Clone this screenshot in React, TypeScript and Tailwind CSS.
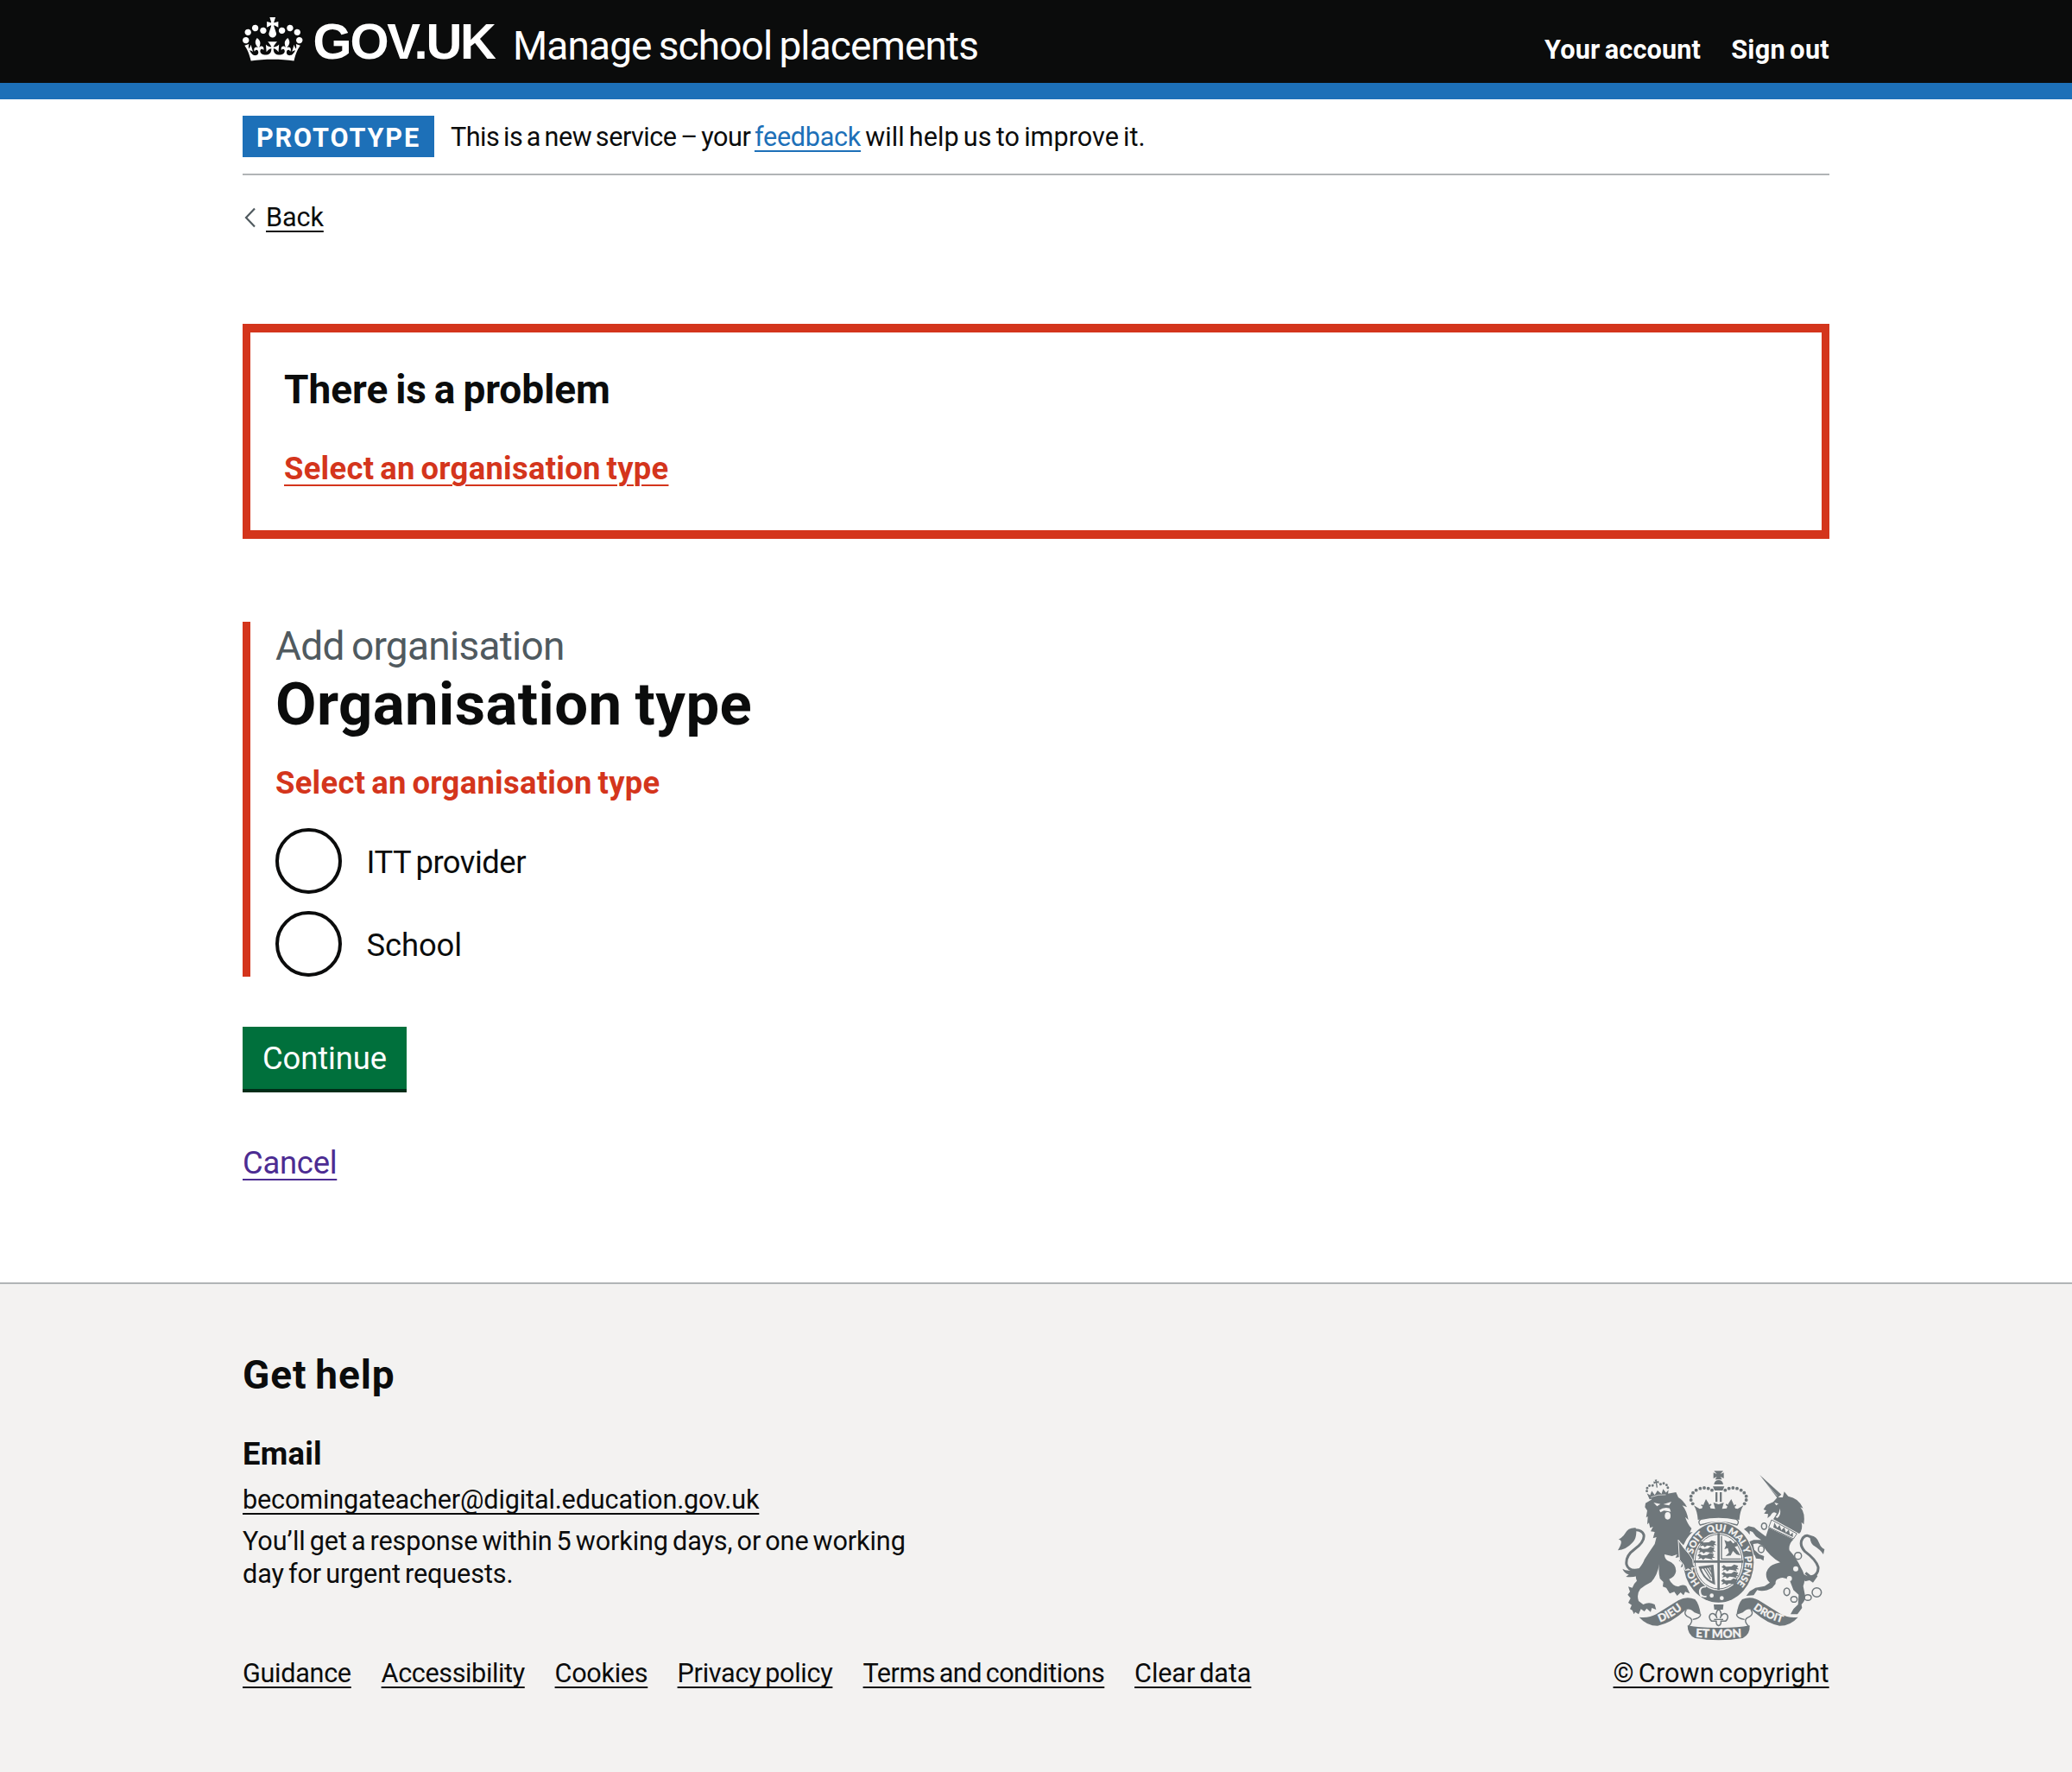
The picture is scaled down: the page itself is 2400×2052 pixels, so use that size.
import React from "react";

const BG = "#f3f2f1";
const GREY = "#6f777b";

const CROWN_PATH =
  "M25 30.2c3.5 1.5 7.7-.2 9.1-3.7 1.5-3.6-.2-7.8-3.9-9.2-3.6-1.4-7.6.3-9.1 3.9-1.4 3.5.3 7.5 3.9 9zM9 39.5c3.6 1.5 7.8-.2 9.2-3.7 1.5-3.6-.2-7.8-3.9-9.1-3.6-1.5-7.6.2-9.1 3.8-1.4 3.5.3 7.5 3.8 9zM4.4 57.2c3.5 1.5 7.7-.2 9.1-3.8 1.5-3.6-.2-7.7-3.9-9.1-3.5-1.5-7.6.3-9.1 3.8-1.4 3.5.3 7.6 3.9 9.1zm38.3-21.4c3.5 1.5 7.7-.2 9.1-3.8 1.5-3.6-.2-7.7-3.9-9.1-3.6-1.5-7.6.3-9.1 3.8-1.3 3.6.4 7.7 3.9 9.1zm64.4-5.6c-3.6 1.5-7.8-.2-9.1-3.7-1.5-3.6.2-7.8 3.8-9.2 3.6-1.4 7.7.3 9.2 3.9 1.3 3.5-.4 7.5-3.9 9zm15.9 9.3c-3.6 1.5-7.7-.2-9.1-3.7-1.5-3.6.2-7.8 3.7-9.1 3.6-1.5 7.7.2 9.2 3.8 1.5 3.5-.3 7.5-3.8 9zm4.7 17.7c-3.6 1.5-7.8-.2-9.2-3.8-1.5-3.6.2-7.7 3.9-9.1 3.6-1.5 7.7.3 9.2 3.8 1.3 3.5-.4 7.6-3.9 9.1zM89.3 35.8c-3.6 1.5-7.8-.2-9.2-3.8-1.4-3.6.2-7.7 3.9-9.1 3.6-1.5 7.7.3 9.2 3.8 1.4 3.6-.3 7.7-3.9 9.1zM69.7 17.7l8.9 4.7V9.3l-8.9 2.8c-.2-.3-.5-.6-.9-.9L72.4 0H59.6l3.5 11.2c-.3.3-.6.5-.9.9l-8.8-2.8v13.1l8.8-4.7c.3.3.6.7.9.9l-5 15.4v.1c-.2.8-.4 1.6-.4 2.4 0 4.1 3.1 7.5 7 8.1h.2c.3 0 .7.1 1 .1.4 0 .7 0 1-.1h.2c4-.6 7.1-4.1 7.1-8.1 0-.8-.1-1.7-.4-2.4V34l-5.1-15.4c.4-.2.7-.6 1-.9zM66 92.8c16.9 0 32.8 1.1 47.1 3.2 4-16.9 8.9-26.7 14-33.5l-9.6-3.4c1 4.9 1.1 7.2 0 10.2-1.5-1.4-3-4.3-4.2-8.7L108.6 76c2.8-2 5-3.2 7.5-3.3-4.4 9.4-10 11.9-13.6 11.2-4.3-.8-6.3-4.6-5.6-7.9 1-4.7 5.7-5.9 8-.5 4.3-8.7-3-11.4-7.6-8.8 7.1-7.2 7.9-13.5 2.1-21.1-8 6.1-8.1 12.3-4.5 20.8-4.7-5.4-12.1-2.5-9.5 6.2 3.4-5.2 7.9-2 7.2 3.1-.6 4.3-6.4 7.8-13.5 7.2-10.3-.9-10.9-8-11.2-13.8 2.5-.5 7.1 1.8 11 7.3L80.2 60c-4.1 4.4-8 5.3-12.3 5.4 1.4-4.4 8-11.6 8-11.6H55.5s6.4 7.2 7.9 11.6c-4.2-.1-8-1-12.3-5.4l1.4 16.4c3.9-5.5 8.5-7.7 10.9-7.3-.3 5.8-.9 12.8-11.1 13.8-7.2.6-12.9-2.9-13.5-7.2-.7-5 3.8-8.3 7.1-3.1 2.7-8.7-4.6-11.6-9.4-6.2 3.7-8.5 3.6-14.7-4.6-20.8-5.8 7.6-5 13.9 2.2 21.1-4.7-2.6-11.9.1-7.7 8.8 2.3-5.5 7.1-4.2 8.1.5.7 3.3-1.3 7.1-5.7 7.9-3.5.7-9-1.8-13.5-11.2 2.5.1 4.7 1.3 7.5 3.3l-4.7-15.4c-1.2 4.4-2.7 7.2-4.3 8.7-1.1-3-.9-5.3 0-10.2l-9.5 3.4c5 6.9 9.9 16.7 14 33.5 14.8-2.1 30.8-3.2 47.7-3.2z";

function Crown() {
  return (
    <svg viewBox="0 0 132 97" className="block h-[51px] w-[69.5px] fill-white" aria-hidden="true">
      <path d={CROWN_PATH} />
    </svg>
  );
}

const ARCH_DOTS: [number, number][] = [
  [272, 124], [266, 111], [266, 98], [273, 86], [284, 77], [298, 71], [312, 69], [326, 71], [339, 77],
];

function Lion() {
  return (
    <g>
      <path d="M108 122L128 110L133 98L214 84L222 102Q240 112 252 136L236 130Q252 150 257 180L246 170Q254 195 268 210L262 224L272 222Q254 238 246 256L240 268L222 250Q236 275 258 300Q274 315 272 335L276 350L262 343L266 360L252 348L246 354L242 340L230 346L236 330L224 322L230 308L212 312L218 300L200 306L174 300Q174 316 185 322Q214 332 214 358Q212 378 190 386Q200 408 222 412Q236 402 250 410L262 436L246 430L240 442L230 432L218 444L208 430L192 436L180 416L168 412L170 396L158 384Q152 360 156 334Q150 372 128 396Q104 408 90 420Q76 438 84 462L100 474Q120 464 140 474L145 492L130 486L126 500L112 488L104 498L92 490L84 508L72 500L68 508L62 494L54 490L60 476L48 468L56 452L46 440L54 430L48 412L62 416Q66 402 78 392Q68 372 86 348Q102 328 104 318Q122 290 140 264L146 240L134 244L140 222L126 220L134 204L124 208L120 190L114 196L116 168L110 172L114 148L106 136Z" />
      <path d="M88 352Q50 362 42 335Q38 305 70 282Q106 255 102 232Q96 214 72 215" fill="none" stroke={GREY} strokeWidth="9" />
      <path d="M74 208Q48 206 38 226Q30 240 14 248Q34 250 12 286Q40 284 60 262Q76 248 76 222Z" />
      <path d="M28 350Q46 362 80 350L92 366Q78 382 40 378L50 370Q34 366 28 350Z" />
      <path d="M136 120L160 125L148 133ZM170 126L198 117L190 130Z" fill={BG} />
      <path d="M156 146Q172 134 192 140L196 152L186 150L172 148L160 154Z" fill={BG} />
      <ellipse cx="185" cy="166" rx="10" ry="13" fill={BG} />
      <g transform="rotate(-9 150 80)">
        <path d="M118 104L112 82L122 90L130 76L138 92L150 78L162 92L170 76L178 90L188 82L182 104Q150 98 118 104Z" />
        {[[113, 74], [116, 64], [125, 57], [136, 58], [164, 58], [175, 57], [184, 64], [187, 74]].map(([x, y]) => (
          <circle key={x} cx={x} cy={y} r="4.4" />
        ))}
        <path d="M146 40H154L152 47L159 45V54L152 51V68H148V51L141 54V45L148 47Z" />
        <path d="M124 97Q150 91 176 97" fill="none" stroke={BG} strokeWidth="2" />
      </g>
    </g>
  );
}

function Unicorn() {
  return (
    <g>
      <path d="M505 24L580 92L566 104Z" />
      <path d="M513 38L566 97" stroke={BG} strokeWidth="1.5" />
      <path d="M518 144L528 128L552 118L566 102L585 102L590 82L604 98Q640 104 656 140L646 136Q664 156 658 196L650 188Q656 214 642 228L552 178L564 158Q552 146 542 166L532 174L534 160L520 158L528 148Z" />
      <path d="M556 120L570 124L562 130ZM574 140Q582 160 566 174L560 170Q574 158 574 140Z" fill={BG} />
      <path d="M546 180L634 228L622 246L536 206Z" fill={BG} stroke={GREY} strokeWidth="3" />
      <path d="M552 206L556 190L566 208L574 198L580 216L590 206L596 224L606 214L610 232L620 224L620 240Z" />
      <path d="M536 208L622 248Q604 264 608 286Q632 312 648 346Q668 378 656 410L662 440Q666 458 650 474L652 486L636 508L612 508L622 490L638 474L640 440L622 424L610 392Q590 376 572 384Q558 388 560 402L548 416Q520 432 496 424L484 442L458 444L470 428L490 416L522 410L540 398Q524 384 528 362Q536 338 560 332L576 328Q540 308 516 270L498 262L482 264L486 284L504 300L520 306L518 322L508 316L492 314L488 304L474 292L468 256L484 250L510 250L492 238L480 222L470 218L470 232L462 222L450 212L466 202L486 206L500 218L526 238Z" />
      <path d="M690 246Q668 224 654 244Q640 266 662 290Q700 318 708 344Q710 370 684 380L664 364" fill="none" stroke={GREY} strokeWidth="9" />
      <path d="M680 234Q704 236 712 262Q718 278 730 282L726 300Q716 284 690 268Q678 256 680 234Z" />
      <path d="M650 366L672 376L700 368L706 376L690 398L678 390L662 394Z" />
      <g fill="none" stroke={GREY} strokeWidth="4.5">
        <ellipse cx="520" cy="202" rx="9" ry="11" fill={BG} />
        <ellipse cx="510" cy="282" rx="10" ry="12" fill={BG} />
        <circle cx="638" cy="305" r="12" fill={BG} />
        <ellipse cx="599" cy="430" rx="10" ry="13" />
        <ellipse cx="624" cy="456" rx="11" ry="10" />
        <ellipse cx="672" cy="450" rx="12" ry="10" />
        <circle cx="703" cy="432" r="16" />
      </g>
      <g fill={BG}>
        <circle cx="630" cy="350" r="9" />
        <circle cx="608" cy="384" r="9" />
      </g>
    </g>
  );
}

function Ribbon() {
  return (
    <g>
      <path d="M86 518Q120 522 145 508L222 460Q250 444 280 456Q294 470 300 510L278 502Q264 486 248 492Q196 540 150 548Q112 548 86 518Z" />
      <path d="M250 492Q236 510 262 520Q278 530 256 552M300 508Q298 522 272 526" fill="none" stroke={GREY} strokeWidth="4" />
    </g>
  );
}

function LionRow({ y, x }: { y: number; x: number }) {
  return (
    <path
      transform={`translate(${x} ${y})`}
      d="M0 0L8 -7L16 -1L34 -2L44 -9L58 -4L54 3L62 8L50 8L54 15L40 11L28 9L20 15L14 9L2 13L8 5Z"
    />
  );
}

function CoatOfArms() {
  return (
    <svg viewBox="0 0 750 615" className="block h-[205px] w-[250px] fill-[#6f777b] [word-spacing:0px]" aria-hidden="true">
      <defs>
        <path id="garter" d="M362 431A92 106 0 0 1 362 219A92 106 0 0 1 362 431" pathLength="100" />
        <path id="dieu" d="M146 539Q190 529 246 482" />
        <path id="droit" d="M470 479Q520 524 602 543" />
        <path id="etmon" d="M262 586Q362 594 462 586" />
      </defs>
      <Lion />
      <Unicorn />

      {/* royal crown */}
      {ARCH_DOTS.map(([x, y]) => (
        <g key={`${x}-${y}`}>
          <circle cx={x} cy={y} r="5.8" />
          <circle cx={724 - x} cy={y} r="5.8" />
        </g>
      ))}
      <path d="M346 10H378L368 21L380 16V36L368 30L374 40H350L356 30L344 36V16L356 21Z" />
      <path d="M346 57Q348 42 362 42Q376 42 378 57ZM342 64H382L376 78H348Z" />
      <path d="M351 84H358V118H351ZM366 84H373V118H366Z" />
      <path d="M276 130L296 142L304 140L310 126L318 108L328 124L334 140L350 142L344 120L362 126L380 120L374 142L390 140L396 124L406 108L414 126L420 140L428 142L448 130Q436 150 434 180Q362 166 290 180Q288 150 276 130Z" />
      <path d="M302 128L312 134L318 128L326 134L336 126M388 126L398 134L406 128L414 134L422 128" fill="none" stroke={GREY} strokeWidth="5" />
      <path d="M300 178Q362 164 424 178Q436 186 426 198Q362 176 298 198Q288 186 300 178Z" fill={BG} stroke={GREY} strokeWidth="4" />

      {/* garter and shield */}
      <ellipse cx="362" cy="328" rx="125" ry="142" fill={BG} />
      <ellipse cx="362" cy="328" rx="122" ry="139" />
      <ellipse cx="362" cy="325" rx="87" ry="100" fill={BG} />
      <ellipse cx="362" cy="325" rx="82" ry="95" fill="none" stroke={GREY} strokeWidth="3" />
      <path d="M358 226H366V424H358ZM276 321H448V329H276Z" />
      <path d="M372 236V316H440" fill="none" stroke={GREY} strokeWidth="4" />
      <LionRow x={294} y={260} />
      <LionRow x={290} y={282} />
      <LionRow x={288} y={304} />
      <LionRow x={372} y={344} />
      <LionRow x={372} y={368} />
      <LionRow x={370} y={392} />
      <path d="M382 250L394 256L404 252L412 262L424 256L430 270L418 274L430 290L438 304L424 300L412 288L404 304L386 306L398 294L394 278L382 282L388 268Z" />
      <path d="M292 342L344 336L350 406L334 398Q306 384 292 342ZM302 350Q314 382 340 394L334 346Z" fillRule="evenodd" />
      <path d="M310 348L334 386M318 346L338 378M326 344L338 364" stroke={GREY} strokeWidth="4" />
      <g fill={BG} stroke={BG} strokeWidth="0.8" fontFamily="Lato, 'Liberation Sans', sans-serif" fontWeight="900" fontSize="33" textAnchor="middle">
        <text><textPath href="#garter" startOffset="18%">HON</textPath></text>
        <text><textPath href="#garter" startOffset="35.2%">SOIT</textPath></text>
        <text><textPath href="#garter" startOffset="48.8%">QUI</textPath></text>
        <text fontSize="32"><textPath href="#garter" startOffset="62.8%">MAL Y</textPath></text>
        <text><textPath href="#garter" startOffset="80.3%">PENSE</textPath></text>
      </g>
      <path d="M318 412Q296 412 298 430Q300 450 320 446M302 416Q290 430 302 448" fill="none" stroke={BG} strokeWidth="5" />
      <circle cx="338" cy="443" r="7" fill={BG} />
      <circle cx="373" cy="452" r="7" fill={BG} />

      {/* forepaw resting on the garter */}
      <path d="M222 250Q238 276 262 302Q276 318 274 336L282 346L268 346L272 360L256 350L246 356L240 336L226 318Z" stroke={BG} strokeWidth="3" />

      {/* motto ribbons */}
      <Ribbon />
      <g transform="translate(724 0) scale(-1 1)">
        <Ribbon />
      </g>
      <path d="M254 547Q300 556 362 555Q424 556 470 547Q472 578 446 591Q362 605 280 591Q254 580 254 547Z" />
      <g fill={BG} stroke={BG} strokeWidth="0.8" fontFamily="Lato, 'Liberation Sans', sans-serif" fontWeight="900" fontSize="38" textAnchor="middle">
        <text><textPath href="#dieu" startOffset="50%">DIEU</textPath></text>
        <text fontSize="36"><textPath href="#droit" startOffset="48%">DROIT</textPath></text>
        <text fontSize="41"><textPath href="#etmon" startOffset="50%">ET MON</textPath></text>
      </g>

      {/* fleur below the shield */}
      <path d="M345 474H379L377 492H347Z" />
      <path d="M362 488Q376 506 368 520Q376 500 390 508Q400 520 386 532H370Q372 544 362 548Q352 544 354 532H338Q324 520 334 508Q348 500 356 520Q348 506 362 488Z" fill={BG} stroke={GREY} strokeWidth="4.5" strokeLinejoin="round" />
      <path d="M346 526H378" stroke={GREY} strokeWidth="4" />
    </svg>
  );
}

const footerLinks = [
  { label: "Guidance", cls: "w-[126px] mr-[34.6px] tracking-[-0.3px]" },
  { label: "Accessibility", cls: "w-[166px] mr-[35px] tracking-[-0.39px]" },
  { label: "Cookies", cls: "w-[107px] mr-[35px] tracking-[-0.3px]" },
  { label: "Privacy policy", cls: "w-[180px] mr-[35px] tracking-[-0.3px]" },
  { label: "Terms and conditions", cls: "w-[279.5px] mr-[35px] tracking-[-0.5px]" },
  { label: "Clear data", cls: "w-[136px] tracking-[-0.1px]" },
];

const smallLink = "underline decoration-2 underline-offset-[5px] [text-decoration-skip-ink:none]";

function Radio({ label, cls }: { label: string; cls: string }) {
  return (
    <label className="flex h-[76.5px] items-center">
      <span className="size-[76.5px] rounded-full border-4 border-[#0b0c0c] bg-white" />
      <span className={`ml-[29px] mt-[4px] text-[36.4px] leading-[48px] ${cls}`}>{label}</span>
    </label>
  );
}

export default function App() {
  return (
    <div className="flex min-h-[2052px] flex-col whitespace-nowrap bg-white font-['Roboto',sans-serif] text-[30.6px] leading-[38px] text-[#0b0c0c] [word-spacing:-2.45px]">
      <header className="h-[115px] border-b-[19px] border-[#1d70b8] bg-[#0b0c0c] text-white">
        <div className="mx-auto flex w-[1838px] items-start">
          <div className="mt-5">
            <Crown />
          </div>
          <span className="ml-[12px] mt-[19px] w-[213px] font-['Liberation_Sans',sans-serif] text-[58px] font-bold leading-[58px] tracking-[-2.2px]">
            GOV.UK
          </span>
          <span className="ml-[18.5px] mt-[30px] text-[46px] leading-[46px] tracking-[-0.87px]">Manage school placements</span>
          <nav className="ml-auto mt-[39px] flex gap-[35px] font-bold">
            <a className="tracking-[0.18px]">Your account</a>
            <a className="tracking-[0.3px]">Sign out</a>
          </nav>
        </div>
      </header>

      <div className="mx-auto w-[1838px] flex-1">
        <div className="flex h-[88px] items-start border-b-2 border-[#b1b4b6] pt-[19px]">
          <strong className="flex h-12 w-[222px] items-center justify-center bg-[#1d70b8] pt-[3px] font-bold tracking-[1.9px] text-white">
            PROTOTYPE
          </strong>
          <p className="ml-[19px] mt-[6px] tracking-[0.03px]">
            <span className="tracking-[-0.5px]">This is a new service – your </span>
            <a className={`tracking-[-0.27px] text-[#1d70b8] ${smallLink}`}>feedback</a> will help us to improve it.
          </p>
        </div>

        <a className="mt-[30px] flex items-center">
          <svg viewBox="0 0 14 24" className="mb-[1px] mr-[11px] ml-[2px] h-[24px] w-[14px]" fill="none" stroke="#505a5f" strokeWidth="2.2" aria-hidden="true">
            <path d="M12 1.5L2 12L12 22.5" />
          </svg>
          <span className={`tracking-[-0.11px] ${smallLink}`}>Back</span>
        </a>

        <section className="mt-[104px] h-[249px] border-x-[9px] border-y-[10px] border-[#d4351c] pl-[39px] pt-[42px] font-bold">
          <h2 className="text-[46px] leading-[48px] tracking-[-0.03px]">There is a problem</h2>
          <a className="mt-[43.6px] block text-[36.4px] leading-[48px] tracking-[0.28px] text-[#d4351c] underline decoration-2 underline-offset-[6px]">
            Select an organisation type
          </a>
        </section>

        <fieldset className="mt-[96px] h-[411px] border-l-[9px] border-[#d4351c] pl-[29px]">
          <span className="block text-[46px] leading-[57px] tracking-[-0.73px] text-[#505a5f]">Add organisation</span>
          <h1 className="text-[68.9px] font-bold leading-[77px] tracking-[0.42px]">Organisation type</h1>
          <p className="mt-[28.6px] text-[36.4px] font-bold leading-[48px] tracking-[0.28px] text-[#d4351c]">Select an organisation type</p>
          <div className="mt-[28.4px] flex flex-col gap-[19.5px]">
            <Radio label="ITT provider" cls="tracking-[-0.5px]" />
            <Radio label="School" cls="tracking-[-0.1px]" />
          </div>
        </fieldset>

        <button className="mt-[57.5px] block h-[76.5px] w-[190px] border-b-4 border-[#002d18] bg-[#00703c] pt-[3px] text-[36.4px] leading-[48px] tracking-[-0.1px] text-white">
          Continue
        </button>
        <a className="mt-[58px] block text-[36.4px] leading-[48px] tracking-[-0.25px] text-[#4c2c92] underline decoration-2 underline-offset-[6px]">
          Cancel
        </a>
      </div>

      <footer className="h-[567px] border-t-2 border-[#b1b4b6] bg-[#f3f2f1]">
        <div className="mx-auto flex w-[1838px] justify-between pt-[81px]">
          <div>
            <h2 className="text-[46px] font-bold leading-[48px] tracking-[0.9px]">Get help</h2>
            <h3 className="mt-[43.5px] text-[36.4px] font-bold leading-[48px] tracking-[0.25px]">Email</h3>
            <a className={`mt-[10px] block w-[599px] tracking-[-0.14px] ${smallLink}`}>becomingateacher@digital.education.gov.uk</a>
            <p className="mt-[10.5px] leading-[38.3px] tracking-[-0.09px]">
              You’ll get a response within 5 working days, or one working
              <br />
              day for urgent requests.
            </p>
            <ul className="mt-[76px] flex">
              {footerLinks.map((l) => (
                <li key={l.label} className={`${l.cls} ${smallLink}`}>
                  {l.label}
                </li>
              ))}
            </ul>
          </div>
          <div className="flex w-[251px] flex-col pt-[132px]">
            <div className="ml-[2px]">
              <CoatOfArms />
            </div>
            <a className={`ml-[0.5px] mt-[13.5px] tracking-[0.1px] ${smallLink}`}>© Crown copyright</a>
          </div>
        </div>
      </footer>
    </div>
  );
}
